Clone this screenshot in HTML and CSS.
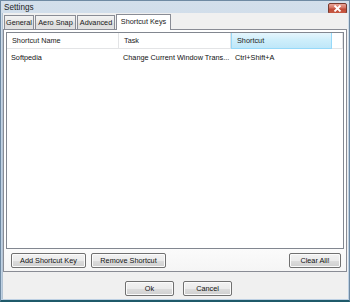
FILE: index.html
```html
<!DOCTYPE html>
<html lang="en">
<head>
    <meta charset="UTF-8">
    <title>Settings</title>
    <link rel="stylesheet" href="styles.css">
</head>
<body>

    <div class="window">
        <div class="titlebar">
            <span class="title">Settings</span>
            <div class="close-btn">
                <svg width="9" height="7" viewBox="0 0 9 7">
                    <path d="M1.5 0.5 L7.5 6.5 M7.5 0.5 L1.5 6.5" stroke="#fff" stroke-width="1.8"/>
                </svg>
            </div>
        </div>

        <div class="client">
            <div class="tabs">
                <div class="tab tab-general">General</div>
                <div class="tab tab-aero">Aero Snap</div>
                <div class="tab tab-advanced">Advanced</div>
                <div class="tab tab-keys active">Shortcut Keys</div>
            </div>

            <div class="tab-page">
                <div class="list">
                    <div class="list-header">
                        <div class="col col-name">Shortcut Name</div>
                        <div class="col col-task">Task</div>
                        <div class="col col-key sorted">Shortcut</div>
                        <div class="col col-fill"></div>
                    </div>
                    <div class="list-row">
                        <div class="cell col-name">Softpedia</div>
                        <div class="cell col-task">Change Current Window Trans...</div>
                        <div class="cell col-key">Ctrl+Shift+A</div>
                    </div>
                </div>

                <div class="page-buttons">
                    <button class="btn btn-add">Add Shortcut Key</button>
                    <button class="btn btn-remove">Remove Shortcut</button>
                    <button class="btn btn-clear">Clear All!</button>
                </div>
            </div>

            <div class="dialog-buttons">
                <button class="btn btn-dialog">Ok</button>
                <button class="btn btn-dialog">Cancel</button>
            </div>
        </div>
    </div>

</body>
</html>
```

FILE: styles.css
```css
:root {
    --face: #f0f0f0;
    --border: #898c95;
    --text: #000000;
}

* {
    box-sizing: border-box;
    margin: 0;
    padding: 0;
}

body {
    font-family: 'Liberation Sans', Arial, sans-serif;
    font-size: 7.3px;
    color: var(--text);
    background: #c5d5e6;
}

.window {
    width: 350px;
    height: 302px;
    display: flex;
    flex-direction: column;
    background: linear-gradient(to bottom, #d3dfeb, #c2d3e5 40%, #bdd0e3);
    border: 1px solid #6f8aa3;
    border-bottom: 2px solid #1f5a6a;
}

.titlebar {
    height: 12px;
    display: flex;
    align-items: center;
    justify-content: space-between;
    padding: 0 2px 0 3px;
}

.title {
    font-size: 8.2px;
    color: #1e1e1e;
    margin-top: 1px;
}

.close-btn {
    width: 19px;
    height: 11px;
    margin-top: 2px;
    display: flex;
    align-items: center;
    justify-content: center;
    background: linear-gradient(to bottom, #eaa597, #d37060 45%, #c04a36 55%, #c65a44);
    border: 1px solid #7a3a2e;
    border-radius: 2px;
}

/* client area */
.client {
    flex: 1;
    margin: 0 1px 1px 1px;
    background: var(--face);
    border-left: 1px solid #b4c4d4;
    display: flex;
    flex-direction: column;
    padding: 0 1px 0 0;
}

.tabs {
    display: flex;
    height: 16px;
    align-items: flex-end;
    padding-left: 1px;
}

.tab {
    height: 14px;
    margin-right: 1px;
    border: 1px solid var(--border);
    border-bottom: none;
    background: linear-gradient(to bottom, #f3f3f3, #e6e6e6 50%, #dcdcdc 51%, #e2e2e2);
    line-height: 13px;
    text-align: center;
    color: #1a1a1a;
}

.tab-general {
    width: 30px;
}

.tab-aero {
    width: 41px;
}

.tab-advanced {
    width: 38px;
}

.tab.active {
    width: 55px;
    height: 16px;
    margin-bottom: -1px;
    background: #ffffff;
    position: relative;
    z-index: 1;
    line-height: 14px;
}

.tab-page {
    height: 243px;
    border: 1px solid var(--border);
    display: flex;
    flex-direction: column;
    padding: 2px 2px 3px 2px;
    background: linear-gradient(to bottom, #ffffff 85%, #f5f5f5);
}

.list {
    height: 218px;
    border: 1px solid #828790;
    background: #ffffff;
}

.list-header {
    display: flex;
    height: 16px;
}

.col {
    height: 100%;
    padding-left: 5px;
    line-height: 15px;
    border-right: 1px solid #e3e4e6;
    border-bottom: 1px solid #e3e4e6;
    color: #222;
}

.col-name {
    width: 112px;
}

.col-task {
    width: 112px;
}

.col-key {
    width: 101px;
}

.col.sorted {
    background: linear-gradient(to bottom, #e6f6fd, #cdeefb 50%, #bfe7f9);
    border: 1px solid #96d9f9;
    border-top: none;
}

.col-fill {
    flex: 1;
}

.list-row {
    display: flex;
    height: 14px;
    line-height: 14px;
    margin-top: 2px;
}

.cell {
    padding-left: 4px;
    color: #111;
    white-space: nowrap;
}

.page-buttons {
    display: flex;
    gap: 5px;
    margin-top: 4px;
    padding: 0 3px 0 5px;
}

.btn {
    height: 15px;
    font-family: 'Liberation Sans', Arial, sans-serif;
    font-size: 7.3px;
    color: #111;
    border: 1px solid #707070;
    border-radius: 2px;
    background: linear-gradient(to bottom, #f2f2f2 0%, #ebebeb 50%, #dddddd 51%, #cfcfcf 100%);
    box-shadow: inset 0 0 0 1px #fbfbfb;
}

.btn-add {
    width: 75px;
}

.btn-remove {
    width: 75px;
}

.btn-clear {
    width: 52px;
    margin-left: auto;
}

.dialog-buttons {
    display: flex;
    justify-content: center;
    gap: 9px;
    margin-top: 9px;
    padding-left: 7px;
}

.btn-dialog {
    width: 49px;
}
```
